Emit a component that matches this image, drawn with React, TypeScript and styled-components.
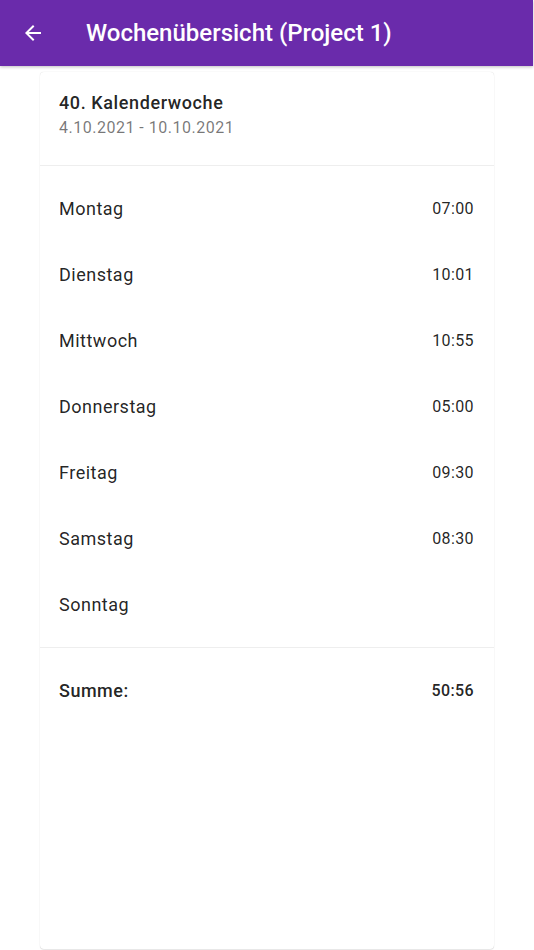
import React from "react";
import styled, { createGlobalStyle } from "styled-components";

const Global = createGlobalStyle`
  html, body { margin: 0; padding: 0; background: #ffffff; }
  body { font-family: Roboto, "Noto Sans", sans-serif; -webkit-font-smoothing: antialiased; }
  * { box-sizing: border-box; }
`;

const Page = styled.div`
  width: 534px;
  height: 950px;
  display: flex;
  flex-direction: column;
  overflow: hidden;
  background: #fff;
`;

const AppBar = styled.header`
  height: 66px;
  flex: 0 0 66px;
  width: 533px;
  background: #6a2bab;
  display: flex;
  align-items: center;
  padding-left: 20px;
  box-shadow: 0 1px 3px rgba(0, 0, 0, 0.25);
  position: relative;
  z-index: 1;
`;

const BackButton = styled.button`
  width: 26px;
  height: 26px;
  padding: 0;
  border: none;
  background: transparent;
  display: flex;
  align-items: center;
  justify-content: center;
  margin-right: 40px;
  cursor: pointer;
`;

const Title = styled.h1`
  margin: 0;
  color: #ffffff;
  font-size: 24px;
  font-weight: 500;
  letter-spacing: 0;
`;

const Card = styled.section`
  flex: 1;
  margin: 6px 40px 1px 40px;
  background: #fff;
  border-radius: 4px;
  box-shadow: 0 0 1px rgba(0, 0, 0, 0.2), 0 1px 1px rgba(0, 0, 0, 0.08);
  display: flex;
  flex-direction: column;
`;

const CardHeader = styled.div`
  padding: 19px 20px 25px 19px;
  display: flex;
  flex-direction: column;
`;

const WeekTitle = styled.div`
  font-size: 18px;
  line-height: 24px;
  font-weight: 500;
  letter-spacing: 0.6px;
  color: rgba(0, 0, 0, 0.87);
`;

const WeekRange = styled.div`
  margin-top: 1px;
  font-size: 16px;
  line-height: 24px;
  color: rgba(0, 0, 0, 0.54);
  letter-spacing: 0.5px;
`;

const Divider = styled.hr`
  margin: 0;
  border: none;
  border-top: 1px solid #eeeeee;
`;

const DayList = styled.div`
  padding: 9px 0 10px;
  display: flex;
  flex-direction: column;
`;

const Row = styled.div<{ $bold?: boolean }>`
  height: 66px;
  display: flex;
  align-items: center;
  justify-content: space-between;
  padding: 0 20px 0 19px;
  color: rgba(0, 0, 0, 0.87);
  font-weight: ${(p) => (p.$bold ? 500 : 400)};
`;

const Day = styled.span`
  font-size: 18px;
  letter-spacing: 0.5px;
`;

const Time = styled.span`
  font-size: 16px;
  letter-spacing: 0.4px;
`;

const days: [string, string][] = [
  ["Montag", "07:00"],
  ["Dienstag", "10:01"],
  ["Mittwoch", "10:55"],
  ["Donnerstag", "05:00"],
  ["Freitag", "09:30"],
  ["Samstag", "08:30"],
  ["Sonntag", ""],
];

export default function App() {
  return (
    <>
      <Global />
      <Page>
        <AppBar>
          <BackButton aria-label="Zurück">
            <svg width="24" height="24" viewBox="0 0 24 24">
              <path d="M20 11H7.83l5.59-5.59L12 4l-8 8 8 8 1.41-1.41L7.83 13H20v-2z" fill="#fff" />
            </svg>
          </BackButton>
          <Title>Wochenübersicht (Project 1)</Title>
        </AppBar>
        <Card>
          <CardHeader>
            <WeekTitle>40. Kalenderwoche</WeekTitle>
            <WeekRange>4.10.2021 - 10.10.2021</WeekRange>
          </CardHeader>
          <Divider />
          <DayList>
            {days.map(([d, t]) => (
              <Row key={d}>
                <Day>{d}</Day>
                <Time>{t}</Time>
              </Row>
            ))}
          </DayList>
          <Divider />
          <DayList>
            <Row $bold>
              <Day>Summe:</Day>
              <Time>50:56</Time>
            </Row>
          </DayList>
        </Card>
      </Page>
    </>
  );
}
